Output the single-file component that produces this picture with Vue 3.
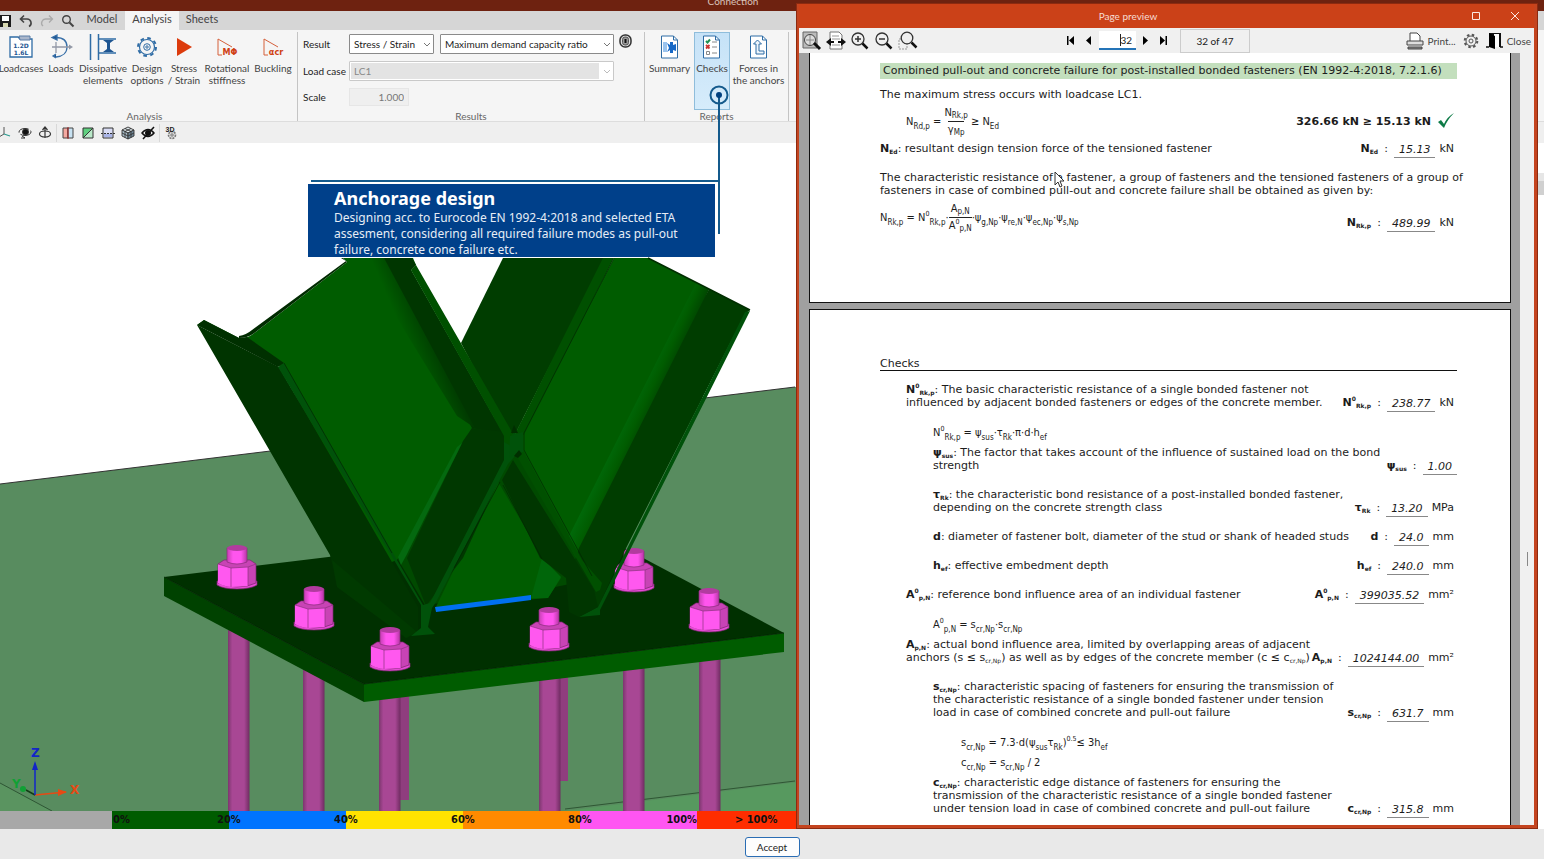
<script setup>
import { ref } from 'vue'

const result = ref('Stress / Strain')
const quantity = ref('Maximum demand capacity ratio')
const loadcase = ref('LC1')
const scale = ref('1.000')
const page = ref('32')

const tabs = ['Model', 'Analysis', 'Sheets']
const activeTab = ref('Analysis')

const rods = [
  { x: 228, y: 625, h: 190 },
  { x: 303, y: 660, h: 155 },
  { x: 379, y: 690, h: 125 },
  { x: 539, y: 660, h: 155 },
  { x: 623, y: 650, h: 165 },
  { x: 699, y: 640, h: 175 }
]
const backNuts = [
  [237, 545],
  [634, 548]
]
const frontNuts = [
  [314, 586],
  [390, 627],
  [549, 607],
  [709, 588]
]

const legend = [
  { name: 'none', label: '' },
  { name: 'green', label: '0%' },
  { name: 'blue', label: '20%' },
  { name: 'yellow', label: '40%' },
  { name: 'orange', label: '60%' },
  { name: 'pink', label: '80%', end: '100%' },
  { name: 'red', label: '> 100%' }
]
</script>

<template>
  <div class="app">
    <header class="app-title">Connection</header>

    <nav class="tabs">
      <div class="quick">
        <button aria-label="Save">
          <svg width="12" height="14" viewBox="0 0 12 14">
            <path d="M0 1h11v12H0z" fill="#1b1b1b" />
            <path d="M2 2h7v5H2z" fill="#fff" />
            <path d="M3 9h5v4H3z" fill="#d8d8b0" />
          </svg>
        </button>
        <button aria-label="Undo">
          <svg width="14" height="14" viewBox="0 0 14 14" fill="none" stroke="#444" stroke-width="1.6">
            <path d="M5 1.500L1.500 5 5 8.500M2 5h6a4 4 0 0 1 2 7.500" />
          </svg>
        </button>
        <button aria-label="Redo">
          <svg width="14" height="14" viewBox="0 0 14 14" fill="none" stroke="#aaa" stroke-width="1.3">
            <path d="M9 1.500L12.500 5 9 8.500M12 5H6a4 4 0 0 0-3 7" />
          </svg>
        </button>
        <button aria-label="Find">
          <svg width="14" height="14" viewBox="0 0 14 14" fill="none" stroke="#444">
            <circle cx="5.500" cy="5.500" r="3.800" stroke-width="1.400" />
            <path d="M8.500 8.500l4 4" stroke-width="2" />
          </svg>
        </button>
      </div>
      <button
        v-for="tab in tabs"
        :key="tab"
        class="tab"
        :class="{ active: tab === activeTab }"
        @click="activeTab = tab"
      >
        {{ tab }}
      </button>
    </nav>

    <div class="ribbon">
      <section class="group group-analysis">
        <div class="tools">
          <button class="tool">
            <svg width="26" height="26" viewBox="0 0 26 26">
              <path d="M2 3h8l2 2h12v18H2z" fill="#fff" stroke="#2f6ca5" stroke-width="1.300" />
              <path d="M11 2h11v4H12z" fill="#a9b6cb" stroke="#5a7ca6" />
              <text x="13" y="14" class="icon-num">1.2D</text>
              <text x="13" y="21" class="icon-num">1.6L</text>
            </svg>
            Loadcases
          </button>
          <button class="tool">
            <svg width="26" height="26" viewBox="0 0 26 26" fill="none" stroke="#3970a8" stroke-width="1.300">
              <path d="M8 3.500c8 0 11 4 11 9.500S15 22.500 8 23" />
              <path d="M9 1L4 3.500 9 6zM8 20l-3 2 3 2" fill="#1e5591" />
              <path d="M4 13h18M8 8v11" stroke="#9298a6" />
              <path d="M21 10.500l4 2.500-4 2.500z" fill="#9298a6" stroke="none" />
            </svg>
            Loads
          </button>
          <button class="tool">
            <svg width="28" height="26" viewBox="0 0 28 26" fill="none" stroke="#2f6ca5">
              <path d="M1.500 0v26M9.500 0v26" stroke-width="1.500" />
              <path d="M10 5h17M10 19h17" stroke-width="1.500" />
              <path d="M14 6h11l-4 3v6l4 3H14l4-3V9z" fill="#1e5591" stroke="none" />
            </svg>
            Dissipative<br />elements
          </button>
          <button class="tool">
            <svg width="26" height="26" viewBox="0 0 26 26" fill="none" stroke="#2f6ca5">
              <circle cx="13" cy="13" r="7.500" stroke-width="1.200" />
              <circle cx="13" cy="13" r="9" stroke-width="2" stroke-dasharray="3.600 3.469" />
              <circle cx="13" cy="13" r="3.300" />
              <circle cx="13" cy="13" r="1.200" />
            </svg>
            Design<br />options
          </button>
          <button class="tool">
            <svg width="26" height="26" viewBox="0 0 26 26"><path d="M6 4l15 9-15 9z" fill="#dc3b0c" /></svg>
            Stress<br />/ Strain
          </button>
          <button class="tool">
            <svg width="26" height="26" viewBox="0 0 26 26">
              <path d="M8 21H4V5l14 8" fill="none" stroke="#d5603b" />
              <text x="16" y="21" class="icon-red">MΦ</text>
            </svg>
            Rotational<br />stiffness
          </button>
          <button class="tool">
            <svg width="26" height="26" viewBox="0 0 26 26">
              <path d="M8 21H4V5l14 8" fill="none" stroke="#d5603b" />
              <text x="16" y="21" class="icon-red">αcr</text>
            </svg>
            Buckling
          </button>
        </div>
        <div class="group-name">Analysis</div>
      </section>

      <section class="group group-results">
        <div class="fields">
          <label for="result">Result</label>
          <div class="inputs">
            <span class="select select-result">
              <select id="result" v-model="result"><option>Stress / Strain</option></select>
              <svg width="8" height="5" viewBox="0 0 8 5"><path d="M1 1l3 3 3-3" /></svg>
            </span>
            <span class="select select-quantity">
              <select v-model="quantity" aria-label="Quantity">
                <option>Maximum demand capacity ratio</option>
              </select>
              <svg width="8" height="5" viewBox="0 0 8 5"><path d="M1 1l3 3 3-3" /></svg>
            </span>
            <button class="target" aria-label="Locate">
              <svg width="13" height="14" viewBox="0 0 13 14">
                <rect x="1" y="1" width="11" height="12" rx="5" fill="#ddd" stroke="#333" stroke-width="1.500" />
                <rect x="3.500" y="3" width="6" height="8" rx="2.500" fill="#999" stroke="#555" />
                <path d="M5.500 5h2v4h-2z" fill="#111" />
              </svg>
            </button>
          </div>
          <label for="loadcase">Load case</label>
          <div class="inputs">
            <span class="select select-case">
              <select id="loadcase" v-model="loadcase" disabled><option>LC1</option></select>
              <svg width="8" height="5" viewBox="0 0 8 5"><path d="M1 1l3 3 3-3" /></svg>
            </span>
          </div>
          <label for="scale">Scale</label>
          <div class="inputs"><input id="scale" v-model="scale" class="scale" disabled /></div>
        </div>
        <div class="group-name">Results</div>
      </section>

      <section class="group group-reports">
        <div class="tools">
          <button class="tool">
            <svg width="20" height="24" viewBox="0 0 20 24">
              <path d="M1.500 1h12l4 4v18h-16z" fill="#fff" stroke="#2f6ca5" />
              <path d="M13.500 1v4h4" fill="none" stroke="#2f6ca5" />
              <path d="M3 7h4v10H3z" fill="#9bc4ee" />
              <path d="M7 8l3 2V7h3v3l3-1v7l-3-1v3h-3v-3l-3 2 2-4z" fill="#1668c6" />
            </svg>
            Summary
          </button>
          <button class="tool checked">
            <svg width="20" height="24" viewBox="0 0 20 24">
              <path d="M1.500 1h12l4 4v18h-16z" fill="#fff" stroke="#2f6ca5" />
              <path d="M13.500 1v4h4" fill="none" stroke="#2f6ca5" />
              <path d="M4 6l1.500 1.500L8 4.500" fill="none" stroke="#209052" stroke-width="2" />
              <path d="M4 10l3.500 3.500M7.500 10L4 13.500" stroke="#c33" stroke-width="1.800" />
              <path d="M4.500 16.500h3v3h-3z" fill="none" stroke="#888" />
              <path d="M10 7h5M10 12h5M10 18h5" stroke="#888" />
            </svg>
            Checks
          </button>
          <button class="tool">
            <svg width="20" height="24" viewBox="0 0 20 24">
              <path d="M1.500 1h12l4 4v18h-16z" fill="#fff" stroke="#2f6ca5" />
              <path d="M13.500 1v4h4" fill="none" stroke="#2f6ca5" />
              <path d="M7 9v10h8v-3h-5V9h2.500L8.500 5l-4 4z" fill="#eef5fb" stroke="#2f6ca5" />
            </svg>
            Forces in<br />the anchors
          </button>
        </div>
        <div class="group-name">Reports</div>
      </section>
    </div>

    <div class="viewbar">
      <button aria-label="Axes">
        <svg width="14" height="14" viewBox="0 0 14 14" fill="none"><path d="M6 1v7l-5 3" stroke="#555" /><path d="M6 8l6 2" stroke="#2a9b90" stroke-width="1.300" /></svg>
      </button>
      <button aria-label="Orbit">
        <svg width="14" height="14" viewBox="0 0 14 14" fill="none" stroke="#333">
          <ellipse cx="7" cy="6" rx="6" ry="3.500" stroke-dasharray="12 2" /><circle cx="7.500" cy="6" r="3" fill="#111" /><path d="M4 10l3 2H3" />
        </svg>
      </button>
      <button aria-label="Rotate">
        <svg width="14" height="14" viewBox="0 0 14 14" fill="none" stroke="#333" stroke-width="1.200">
          <path d="M7 1v11M4.500 4L7 1l2.500 3" /><ellipse cx="7" cy="8" rx="5.500" ry="3" />
        </svg>
      </button>
      <i></i>
      <button aria-label="Section X">
        <svg width="14" height="14" viewBox="0 0 14 14"><path d="M2 2h5v10H2z" fill="#f4a9a1" stroke="#444" /><path d="M7 2h5v10H7z" fill="#c8e2f2" stroke="#444" /><path d="M7 1v12" stroke="#a22" /></svg>
      </button>
      <button aria-label="Section Y">
        <svg width="14" height="14" viewBox="0 0 14 14"><path d="M2 2h10v10H2z" fill="#5fd07f" /><path d="M12 2v10H2z" fill="#b9e8c8" /><path d="M2 2h10v10H2zM2 12L12 2" fill="none" stroke="#333" /></svg>
      </button>
      <button aria-label="Section Z">
        <svg width="14" height="14" viewBox="0 0 14 14"><path d="M2 2h10v10H2z" fill="#d9dcf4" stroke="#333" /><path d="M3 8h8v3H3z" fill="#a9b4e8" /><path d="M0 7.500h14" stroke="#333" stroke-dasharray="2 1" /></svg>
      </button>
      <button aria-label="Solid">
        <svg width="14" height="14" viewBox="0 0 14 14" stroke="#333" stroke-width=".9">
          <path d="M7 1l6 3-6 3-6-3z" fill="#dce6ea" /><path d="M1 4l6 3v6l-6-3z" fill="#a8bcc8" /><path d="M13 4L7 7v6l6-3z" fill="#6f8798" /><path d="M4 2.500l6 3v6M10 2.500l-6 3v6M1 7l6 3 6-3" fill="none" />
        </svg>
      </button>
      <button aria-label="Hide">
        <svg width="14" height="14" viewBox="0 0 14 14"><path d="M1 7q6-7 12 0-6 7-12 0z" fill="none" stroke="#111" stroke-width="1.500" /><circle cx="7" cy="7" r="3" fill="#111" /><path d="M2 13L13 1" stroke="#111" stroke-width="1.500" /></svg>
      </button>
      <i></i>
      <button aria-label="3D settings">
        <svg width="14" height="14" viewBox="0 0 14 14"><circle cx="8" cy="9" r="3.500" fill="#ddd" stroke="#777" stroke-width="1.600" stroke-dasharray="2 1" /><circle cx="8" cy="9" r="1.200" fill="none" stroke="#777" /><text x="6" y="6" class="icon-3d">3D</text></svg>
      </button>
    </div>

    <main class="viewport">
      <svg class="scene" viewBox="0 143 1544 668" preserveAspectRatio="xMinYMin slice">
        <defs>
          <linearGradient id="rod">
            <stop offset="0" stop-color="#7c376e" /><stop offset=".2" stop-color="#a84794" />
            <stop offset=".75" stop-color="#a84794" /><stop offset="1" stop-color="#6f2c61" />
          </linearGradient>
          <linearGradient id="web" gradientUnits="userSpaceOnUse" x1="614" y1="400" x2="655" y2="419">
            <stop offset="0" stop-color="#005c00" /><stop offset=".35" stop-color="#006a0a" />
            <stop offset=".65" stop-color="#005c00" /><stop offset="1" stop-color="#003d00" />
          </linearGradient>
          <linearGradient id="shade" gradientUnits="userSpaceOnUse" x1="410" y1="350" x2="438" y2="338">
            <stop offset="0" stop-color="#005c00" /><stop offset="1" stop-color="#003700" />
          </linearGradient>
          <linearGradient id="bolt">
            <stop offset="0" stop-color="#c53fb2" /><stop offset=".3" stop-color="#ff55ee" />
            <stop offset=".7" stop-color="#ff55ee" /><stop offset="1" stop-color="#b536a4" />
          </linearGradient>
          <g id="nut">
            <path d="M-20 36v4q6 4 20 4t20-4v-4z" fill="#e54bd5" stroke="#7a286d" stroke-width=".7" />
            <path d="M-19 19l6-4h26l6 4v19q-8 4-19 4t-19-4z" fill="#c843b5" stroke="#7a286d" stroke-width=".7" />
            <path d="M-19 19l13 4v19q-8-1-13-4zM-6 23l17-1v19l-17 1z" fill="#ff58ef" />
            <path d="M-19 19l13 4 17-1 8-3M-6 23v19M11 22v19" fill="none" stroke="#8d347f" stroke-width=".7" />
            <path d="M-10 3v14q10 4 20 0V3z" fill="url(#bolt)" stroke="#8a2d7b" stroke-width=".7" />
            <ellipse cy="3" rx="10" ry="3" fill="#b23b9f" />
          </g>
        </defs>

        <path d="M0 484L795 387 1544 296V811H0z" fill="#588c5f" />
        <path d="M0 484L795 387" stroke="#333" fill="none" />
        <path d="M0 783l52 28H0z" fill="#5a9460" />
        <path d="M565 811L1544 689V811z" fill="#57995f" />
        <path d="M0 783l52 28M565 809l230-28" stroke="#2f5634" fill="none" />

        <rect x="400" y="680" width="9" height="120" fill="#8f3d7e" />
        <rect x="560" y="660" width="8" height="121" fill="#8f3d7e" />
        <rect v-for="rod in rods" :key="rod.x" :x="rod.x" :y="rod.y" width="21.500" :height="rod.h" fill="url(#rod)" />

        <path d="M164 577L583 526 784 633 364 684z" fill="#003000" />
        <path d="M164 577l200 107v18L164 596z" fill="#004200" />
        <path d="M364 684l420-51v19L364 702z" fill="#005c00" />
        <path d="M164 577l200 107 420-51" fill="none" stroke="#001e00" stroke-width=".7" />
        <use v-for="nut in backNuts" :key="nut[0]" href="#nut" :x="nut[0]" :y="nut[1]" />

        <path d="M270 345L500 420 590 580 540 590 425 605z" fill="#004a00" />

        <!-- diagonal running from upper right to lower left -->
        <path d="M503 258h102L512 440 461 343z" fill="#003d00" />
        <path d="M614 258h34l61 31-130 261 3 20-60-117v-20z" fill="#005c00" />
        <path d="M696 283L567 540l16 28 34-48 92-231z" fill="url(#web)" />
        <path d="M709 289l41 21-5 4-125 246-22 47-19 10-10-40 10-29z" fill="#003d00" />
        <path d="M648 258l61 31 41 21" fill="none" stroke="#002e00" stroke-width="1.500" />
        <path d="M745 312l5-1-125 249-25 50v5l-21 2 19-10z" fill="#00520a" />
        <path d="M603 258h11L524 435l-9-1z" fill="#005000" />
        <path d="M497 480l46 78 18 20-13 20-112 9z" fill="#005c00" />
        <path d="M542 558l19 19-13 21h-17z" fill="#00660a" />

        <!-- diagonal running from upper left to lower right -->
        <path d="M197 325l7-5 35 18q8 1 14-4l94-72-4-4h70l3 7-5 5 93 165-32-7-75 132-13 5-106-202z" fill="#005c00" />
        <path d="M375 258h37l4 7-5 5 93 165-32-7z" fill="#003600" />
        <path d="M360 258l24 0 91 170-18-12z" fill="url(#shade)" />
        <path d="M197 325l82 42 139 240v25l-11 6-70-51-7-32z" fill="#003400" />
        <path d="M197 325l7-5 35 18 8-1 37 26-6 4z" fill="#003000" />
        <path d="M239 338q8 0 14-4l94-72-4-4h-2l5 3-94 69q-6 5-13 6z" fill="#002b00" />
        <path d="M332 560l5 27 69 51 11-6z" fill="#003a00" />
        <path d="M472 428l33 4 4 26-46 100-37 48-19-48 56-117z" fill="#003800" />
        <path d="M462 443l-56 113-5 9-3-8 59-110z" fill="#04690f" />
        <path d="M278 367l6-4 113 197 26 45 7-2 43-83 31-60v-23l10-4 8 2v13l-14 16-72 138-4 6-4 19 7 7-24 2 10-8v-23z" fill="#00520a" />
        <path d="M411 270l5-5 96 167 2 16-10-6v-6z" fill="#005000" />
        <path d="M513 460l-11 20 38 78 26 20 3 34 10 5 19-10-4-17z" fill="#003600" />
        <path d="M515 453l8-3 59 110 20 23-2 7-4 2z" fill="#005000" />
        <path d="M284 363l108 190M614 258l-90 175v17l68 126M500 482l-46 86M503 485l39 74" fill="none" stroke="#002800" stroke-width=".7" />
        <path d="M510 436l13-4v20l-9 2-5 4z" fill="#00520a" />
        <path d="M511 433l7 0-4-8zM514 456l5-6 3 4-4 4z" fill="#002e00" />
        <path d="M435 607l96-12v5l-95 12z" fill="#0070f0" />

        <use v-for="nut in frontNuts" :key="nut[0]" href="#nut" :x="nut[0]" :y="nut[1]" />

        <g stroke-width="1.500">
          <path d="M35 795l31-3" stroke="#e64a14" /><path d="M58 789l9 3-9 4z" fill="#e64a14" />
          <path d="M35 795l-9-5" stroke="#123c16" /><circle cx="23" cy="789" r="3" fill="#10a035" />
          <path d="M35 795v-28" stroke="#1226c8" /><path d="M32 770l3-9 3 9z" fill="#1226c8" />
        </g>
        <text x="31" y="757" class="axis axis-z">Z</text>
        <text x="70" y="794" class="axis axis-x">X</text>
        <text x="12" y="788" class="axis axis-y">Y</text>
      </svg>
      <aside class="side"></aside>
    </main>

    <div class="legend">
      <div v-for="item in legend" :key="item.name" class="legend-item" :class="item.name">
        <span>{{ item.label }}</span>
        <span v-if="item.end">{{ item.end }}</span>
      </div>
    </div>

    <footer class="footer"><button class="accept">Accept</button></footer>

    <svg class="leader" width="424" height="160" viewBox="0 0 424 160">
      <g fill="none" stroke="#145a8c" stroke-width="2">
        <circle cx="411" cy="15" r="8.500" /><path d="M411 15v139M3 101h408" />
      </g>
      <circle cx="411" cy="15" r="3" fill="#00407f" />
    </svg>
    <section class="callout">
      <h2>Anchorage design</h2>
      <p>
        Designing acc. to Eurocode EN 1992-4:2018 and selected ETA<br />
        assesment, considering all required failure modes as pull-out<br />
        failure, concrete cone failure etc.
      </p>
    </section>

    <div class="preview" role="dialog" aria-label="Page preview">
      <header class="preview-title">
        <span>Page preview</span>
        <button aria-label="Maximize"><svg width="10" height="10" viewBox="0 0 10 10"><path d="M1.500 1.500h7v7h-7z" /></svg></button>
        <button aria-label="Close window"><svg width="10" height="10" viewBox="0 0 10 10"><path d="M1 1l8 8M9 1L1 9" /></svg></button>
      </header>
      <div class="preview-tools">
        <div class="zooms">
          <button aria-label="Whole page">
            <svg width="20" height="20" viewBox="0 0 20 20"><path d="M1 1h14v16H1z" fill="#bbb" stroke="#666" /><circle cx="8" cy="9" r="5.500" fill="#ddd" stroke="#444" /><path d="M4 9h8M8 4v10" stroke="#888" /><path d="M12 12l6 6" stroke="#111" stroke-width="3" /></svg>
          </button>
          <button aria-label="Page width">
            <svg width="20" height="20" viewBox="0 0 20 20"><path d="M4 1h9l3 3v14H4z" fill="#fff" stroke="#777" /><path d="M6 5h7M6 8h8M6 14h8" stroke="#999" /><path d="M0 11l5-4v3h3v2H5v3zM20 11l-5-4v3h-3v2h3v3z" fill="#111" /></svg>
          </button>
          <button aria-label="Zoom in">
            <svg width="20" height="20" viewBox="0 0 20 20" fill="none" stroke="#333"><circle cx="8" cy="8" r="6" stroke-width="1.300" /><path d="M5 8h6M8 5v6" stroke-width="1.500" /><path d="M12.500 12.500l5 5" stroke="#111" stroke-width="2.500" /></svg>
          </button>
          <button aria-label="Zoom out">
            <svg width="20" height="20" viewBox="0 0 20 20" fill="none" stroke="#333"><circle cx="8" cy="8" r="6" stroke-width="1.300" /><path d="M5 8h6" stroke-width="1.500" /><path d="M12.500 12.500l5 5" stroke="#111" stroke-width="2.500" /></svg>
          </button>
          <button aria-label="Zoom window">
            <svg width="20" height="20" viewBox="0 0 20 20" fill="none" stroke="#333"><path d="M1 8h8v10H1z" stroke="#999" stroke-dasharray="2 1" /><circle cx="9" cy="7" r="5.800" fill="#eee" stroke-width="1.300" /><path d="M13.500 11.500l5 5" stroke="#111" stroke-width="2.500" /></svg>
          </button>
        </div>
        <div class="pager">
          <button aria-label="First page"><svg width="9" height="9" viewBox="0 0 9 9"><path d="M1 0h1.500v9H1zM8 0v9L3 4.500z" /></svg></button>
          <button aria-label="Previous page"><svg width="9" height="9" viewBox="0 0 9 9"><path d="M7 0v9L2 4.500z" /></svg></button>
          <span class="page-box"><input v-model="page" aria-label="Page" /></span>
          <button aria-label="Next page"><svg width="9" height="9" viewBox="0 0 9 9"><path d="M2 0v9l5-4.500z" /></svg></button>
          <button aria-label="Last page"><svg width="9" height="9" viewBox="0 0 9 9"><path d="M1 0v9l5-4.500zM6.500 0H8v9H6.500z" /></svg></button>
          <span class="page-count">32 of 47</span>
        </div>
        <div class="actions">
          <button>
            <svg width="18" height="18" viewBox="0 0 18 18" fill="#fff" stroke="#444"><path d="M4 9V1h7l3 3v5" /><path d="M1 9h16v4H1z" fill="#ddd" /><path d="M2 15h14v2H2z" fill="#888" /></svg>
            Print...
          </button>
          <button aria-label="Settings">
            <svg width="16" height="16" viewBox="0 0 16 16" fill="none" stroke="#555"><circle cx="8" cy="8" r="5" /><circle cx="8" cy="8" r="6.300" stroke-width="2" stroke-dasharray="2.500 2.450" /><circle cx="8" cy="8" r="2" /></svg>
          </button>
          <button>
            <svg width="17" height="18" viewBox="0 0 17 18"><path d="M3 1h12v14H3z" fill="#111" /><path d="M8 2h5v13H8z" fill="#fff" /><path d="M3 1l6 3v13l-6-2z" fill="#000" /><path d="M0 15h3M14 15h3" stroke="#111" stroke-width="1.500" /></svg>
            Close
          </button>
        </div>
      </div>

      <div class="preview-body">
        <div class="pages">
          <article class="page page-first">
            <h3 class="check-head">Combined pull-out and concrete failure for post-installed bonded fasteners (EN 1992-4:2018, 7.2.1.6)</h3>
            <p class="line first-line">The maximum stress occurs with loadcase LC1.</p>
            <div class="verdict">
              <div class="formula indent-1">
                N<sub>Rd,p</sub> =
                <span class="frac"><span>N<sub>Rk,p</sub></span><span>γ<sub>Mp</sub></span></span>
                ≥ N<sub>Ed</sub>
              </div>
              <strong>326.66 kN ≥ 15.13 kN</strong>
              <svg width="18" height="16" viewBox="0 0 18 16"><path d="M1 9l3-2 3 4q3-7 10-11Q10 7 7 15z" fill="#0c7a46" /></svg>
            </div>
            <div class="row after-verdict">
              <p><b>N<sub>Ed</sub></b>: resultant design tension force of the tensioned fastener</p>
              <div class="value"><b>N<sub>Ed</sub></b><span>:</span><em>15.13</em><span class="unit">kN</span></div>
            </div>
            <p class="line spaced">
              The characteristic resistance of a fastener, a group of fasteners and the tensioned fasteners of a group of<br />
              fasteners in case of combined pull-out and concrete failure shall be obtained as given by:
            </p>
            <div class="row resistance">
              <div class="formula">
                N<sub>Rk,p</sub> = N<sup>0</sup><sub>Rk,p</sub>·<span class="frac"><span>A<sub>p,N</sub></span><span>A<sup>0</sup><sub>p,N</sub></span></span>·ψ<sub>g,Np</sub>·ψ<sub>re,N</sub>·ψ<sub>ec,Np</sub>·ψ<sub>s,Np</sub>
              </div>
              <div class="value"><b>N<sub>Rk,p</sub></b><span>:</span><em>489.99</em><span class="unit">kN</span></div>
            </div>
          </article>

          <article class="page page-second">
            <h3 class="page-head">Checks</h3>
            <div class="row indent-1">
              <p>
                <b>N<sup>0</sup><sub>Rk,p</sub></b>: The basic characteristic resistance of a single bonded fastener not<br />
                influenced by adjacent bonded fasteners or edges of the concrete member.
              </p>
              <div class="value"><b>N<sup>0</sup><sub>Rk,p</sub></b><span>:</span><em>238.77</em><span class="unit">kN</span></div>
            </div>
            <div class="formula single indent-2">N<sup>0</sup><sub>Rk,p</sub> = ψ<sub>sus</sub>·τ<sub>Rk</sub>·π·d·h<sub>ef</sub></div>
            <div class="row tight indent-2">
              <p>
                <b>ψ<sub>sus</sub></b>: The factor that takes account of the influence of sustained load on the bond<br />
                strength
              </p>
              <div class="value"><b>ψ<sub>sus</sub></b><span>:</span><em>1.00</em></div>
            </div>
            <div class="row spaced indent-2">
              <p>
                <b>τ<sub>Rk</sub></b>: the characteristic bond resistance of a post-installed bonded fastener,<br />
                depending on the concrete strength class
              </p>
              <div class="value"><b>τ<sub>Rk</sub></b><span>:</span><em>13.20</em><span class="unit">MPa</span></div>
            </div>
            <div class="row spaced indent-2">
              <p><b>d</b>: diameter of fastener bolt, diameter of the stud or shank of headed studs</p>
              <div class="value"><b>d</b><span>:</span><em>24.0</em><span class="unit">mm</span></div>
            </div>
            <div class="row spaced indent-2">
              <p><b>h<sub>ef</sub></b>: effective embedment depth</p>
              <div class="value"><b>h<sub>ef</sub></b><span>:</span><em>240.0</em><span class="unit">mm</span></div>
            </div>
            <div class="row spaced indent-1">
              <p><b>A<sup>0</sup><sub>p,N</sub></b>: reference bond influence area of an individual fastener</p>
              <div class="value"><b>A<sup>0</sup><sub>p,N</sub></b><span>:</span><em>399035.52</em><span class="unit">mm²</span></div>
            </div>
            <div class="formula single indent-2">A<sup>0</sup><sub>p,N</sub> = s<sub>cr,Np</sub>·s<sub>cr,Np</sub></div>
            <div class="row tight indent-1">
              <p>
                <b>A<sub>p,N</sub></b>: actual bond influence area, limited by overlapping areas of adjacent<br />
                anchors (s ≤ s<sub>cr,Np</sub>) as well as by edges of the concrete member (c ≤ c<sub>cr,Np</sub>)
              </p>
              <div class="value"><b>A<sub>p,N</sub></b><span>:</span><em>1024144.00</em><span class="unit">mm²</span></div>
            </div>
            <div class="row spaced indent-2">
              <p>
                <b>s<sub>cr,Np</sub></b>: characteristic spacing of fasteners for ensuring the transmission of<br />
                the characteristic resistance of a single bonded fastener under tension<br />
                load in case of combined concrete and pull-out failure
              </p>
              <div class="value"><b>s<sub>cr,Np</sub></b><span>:</span><em>631.7</em><span class="unit">mm</span></div>
            </div>
            <div class="formula single indent-3">s<sub>cr,Np</sub> = 7.3·d(ψ<sub>sus</sub>τ<sub>Rk</sub>)<sup>0.5</sup>≤ 3h<sub>ef</sub></div>
            <div class="formula indent-3">c<sub>cr,Np</sub> = s<sub>cr,Np</sub> / 2</div>
            <div class="row tight indent-2">
              <p>
                <b>c<sub>cr,Np</sub></b>: characteristic edge distance of fasteners for ensuring the<br />
                transmission of the characteristic resistance of a single bonded fastener<br />
                under tension load in case of combined concrete and pull-out failure
              </p>
              <div class="value"><b>c<sub>cr,Np</sub></b><span>:</span><em>315.8</em><span class="unit">mm</span></div>
            </div>
          </article>
        </div>
        <div class="scrollbar"><i></i></div>
      </div>
    </div>

    <svg class="pointer" width="12" height="18" viewBox="0 0 12 18">
      <path d="M1 1v13l3-3 2 5 2-1-2-5h4z" fill="#fff" stroke="#333" />
    </svg>
  </div>
</template>

<style>
body {
  margin: 0;
  overflow: hidden;
}
</style>

<style scoped>
* {
  box-sizing: border-box;
}
.app {
  position: relative;
  display: flex;
  flex-direction: column;
  height: 100vh;
  background: #fff;
  color: #444;
  font: 10px/12px Lato, 'Open Sans', sans-serif;
}
button {
  display: flex;
  align-items: center;
  justify-content: center;
  padding: 0;
  border: 0;
  background: none;
  color: inherit;
  font: inherit;
}
svg {
  flex: none;
}
p,
h2,
h3 {
  margin: 0;
  font: inherit;
}
.app-title {
  height: 11px;
  padding-right: 78px;
  background: #6e2210;
  color: #d9c3bb;
  text-align: center;
  line-height: 2px;
}
.tabs {
  display: flex;
  height: 19px;
  background: #d6d6d6;
}
.quick {
  display: flex;
  gap: 7px;
  width: 79px;
}
.tab {
  width: 46px;
  padding-bottom: 3px;
  font-size: 11px;
}
.tab.active {
  width: 54px;
  background: #f5f5f5;
}
.ribbon {
  display: flex;
  height: 92px;
  background: #f5f5f5;
  border-bottom: 1px solid #ddd;
}
.group {
  display: flex;
  flex-direction: column;
  justify-content: space-between;
  border-right: 1px solid #c4c4c4;
  margin-top: 2px;
}
.group-name {
  text-align: center;
  color: #666;
  line-height: 10px;
}
.group-analysis {
  width: 298px;
}
.group-analysis .group-name {
  padding-right: 8px;
}
.group-results {
  width: 347px;
}
.group-reports {
  width: 144px;
}
.tools {
  display: grid;
  height: 78px;
}
.group-analysis .tools {
  grid-template-columns: 42px 38px 46px 42px 32px 54px 38px;
}
.group-reports .tools {
  grid-template-columns: 49px 36px 57px;
}
.tool {
  flex-direction: column;
  justify-content: flex-start;
  padding-top: 2px;
  white-space: nowrap;
  text-align: center;
}
.tool svg {
  height: 26px;
  margin-bottom: 2px;
}
.tool.checked {
  background: linear-gradient(#c6e2f7, #d6ecfb);
  border: 1px solid #8fbddb;
  padding-top: 1px;
}
.icon-num {
  font: bold 6px 'DejaVu Sans', sans-serif;
  fill: #1e5591;
  text-anchor: middle;
}
.icon-red {
  font: bold 9px 'DejaVu Sans Condensed', sans-serif;
  fill: #cf3f12;
  text-anchor: middle;
}
.icon-3d {
  font: bold 7px 'Liberation Sans', sans-serif;
  fill: #222;
  text-anchor: middle;
}
.fields {
  display: grid;
  grid-template-columns: 46px 1fr;
  grid-template-rows: 20px 20px 18px;
  row-gap: 7px;
  align-items: center;
  padding: 2px 0 0 5px;
  color: #222;
}
.inputs {
  display: flex;
  gap: 6px;
}
.select {
  position: relative;
}
.select svg {
  position: absolute;
  right: 3px;
  top: 8px;
  fill: none;
  stroke: #777;
}
select,
input {
  font: inherit;
  color: #222;
}
select {
  appearance: none;
  width: 100%;
  height: 20px;
  padding: 0 4px;
  background: #fff;
  border: 1px solid #8a8a8a;
  border-radius: 1px;
}
select:disabled {
  background: linear-gradient(#e3e3e3, #e3e3e3) no-repeat 1px 1px / calc(100% - 15px) 16px #fff;
  border-color: #c9c9c9;
  color: #888;
  opacity: 1;
}
select:disabled + svg {
  stroke: #bbb;
}
.select-result {
  width: 85px;
}
.select-quantity {
  width: 174px;
}
.select-case {
  width: 265px;
}
.target {
  margin-left: -1px;
  padding-bottom: 6px;
}
.scale {
  width: 60px;
  height: 18px;
  padding: 0 4px;
  text-align: right;
  color: #777;
  background: #efefef;
  border: 1px solid #e6e6e6;
}
.viewbar {
  display: flex;
  align-items: center;
  gap: 6px;
  height: 21px;
  margin-left: -2px;
  background: #efefef;
}
.viewbar i {
  width: 1px;
  height: 18px;
  margin: 0 -2px;
  background: #d8d8d8;
}
.viewport {
  position: relative;
  flex: 1;
  min-height: 0;
}
.scene {
  display: block;
  width: 100%;
  height: 100%;
}
.side {
  position: absolute;
  inset: 0 0 0 auto;
  width: 20px;
  background: linear-gradient(#fff 30px, #e6e6e6 30px, #e6e6e6 38px, #d0d0d0 38px, #d0d0d0 52px, #fff 52px);
}
.axis {
  font: bold 12px 'DejaVu Sans', sans-serif;
}
.axis-z {
  fill: #1226c8;
}
.axis-x {
  fill: #e64a14;
}
.axis-y {
  fill: #10a035;
}
.legend {
  display: flex;
  height: 18px;
  font: bold 11px/18px 'DejaVu Sans Condensed', 'DejaVu Sans', sans-serif;
  color: #111;
}
.legend-item {
  display: flex;
  justify-content: space-between;
  width: 117px;
}
.legend-item span:first-child {
  margin-left: -12px;
}
.legend .none {
  width: 112px;
  background: #a8a8a8;
}
.legend .green {
  background: #005c00;
}
.legend .green span {
  margin-left: 1px;
}
.legend .blue {
  background: #0074ff;
}
.legend .yellow {
  background: #ffe300;
}
.legend .orange {
  background: #ff8a00;
}
.legend .pink {
  background: #ff55f2;
}
.legend .red {
  background: #ff2d00;
}
.legend .red span {
  margin-left: 38px;
}
.footer {
  display: flex;
  align-items: center;
  justify-content: center;
  height: 30px;
  padding-top: 5px;
  background: #e9e9e9;
}
.accept {
  width: 55px;
  height: 20px;
  border: 1px solid #2a6db4;
  border-radius: 3px;
  background: #fdfdfd;
  color: #222;
}
.leader {
  position: absolute;
  left: 308px;
  top: 80px;
}
.callout {
  position: absolute;
  left: 308px;
  top: 184px;
  width: 407px;
  padding: 3px 0 0 26px;
  height: 73px;
  background: #00408a;
  color: #e6edf6;
  font: 12px/16px 'Noto Sans', 'Open Sans', sans-serif;
  white-space: nowrap;
}
.callout h2 {
  font-size: 18px;
  line-height: 23px;
  font-weight: bold;
  color: #fff;
}
.preview {
  position: absolute;
  left: 796px;
  right: 6px;
  top: 3px;
  bottom: 30px;
  display: flex;
  flex-direction: column;
  border: 1px solid #8c2a10;
  box-shadow: inset 0 0 0 3px #c4441f;
  padding: 0 3px 3px 2px;
  background: #c4441f;
}
.preview-title {
  display: flex;
  align-items: center;
  height: 24px;
  padding-right: 14px;
  background: #cb4118;
  color: #f6ddd3;
}
.preview-title span {
  flex: 1;
  padding-right: 14px;
  text-align: center;
}
.preview-title svg {
  fill: none;
  stroke: #fbe9e2;
}
.preview-title button + button {
  margin-left: 29px;
}
.preview-tools {
  display: flex;
  align-items: center;
  height: 25px;
  padding: 0 3px;
  background: #f0f0f0;
}
.zooms {
  display: flex;
  gap: 4px;
}
.pager {
  display: flex;
  align-items: center;
  gap: 9px;
  margin-left: 148px;
}
.page-box {
  position: relative;
  margin: 0 -4px 0 -3px;
}
.page-box::after {
  content: '';
  position: absolute;
  right: 15px;
  top: 3px;
  width: 1px;
  height: 12px;
  background: #222;
}
.page-box input {
  display: block;
  width: 37px;
  height: 19px;
  padding: 0 4px 0 0;
  text-align: right;
  border: 0;
  border-bottom: 2px solid #2474b8;
  background: #fff;
}
.page-count {
  width: 70px;
  margin-left: 3px;
  border: 1px solid #ccc;
  text-align: center;
  line-height: 22px;
  color: #222;
}
.actions {
  display: flex;
  gap: 7px;
  margin-left: auto;
}
.actions button {
  gap: 4px;
}
.preview-body {
  display: flex;
  flex: 1;
  min-height: 0;
  background: #a0a0a0;
}
.pages {
  display: flex;
  flex-direction: column;
  gap: 6px;
  flex: 1;
  margin: 0 9px 0 10px;
  min-width: 0;
}
.page {
  background: #fff;
  border: 1px solid #111;
  border-top-width: 0;
  padding: 10px 53px 0 70px;
  color: #1c1c1c;
  font: 11px/13px 'DejaVu Sans', sans-serif;
  white-space: nowrap;
}
.page-first {
  flex: none;
  padding-bottom: 68px;
}
.page-second {
  flex: 1;
  min-height: 0;
  padding-top: 47px;
  border-top-width: 1px;
  border-bottom-width: 0;
  overflow: hidden;
}
.check-head {
  padding-left: 3px;
  background: #c3dfbd;
  line-height: 16px;
}
.first-line {
  margin-top: 9px;
}
sub,
sup {
  font-size: 6px;
  line-height: 0;
}
sub {
  vertical-align: -2px;
}
sup {
  vertical-align: 5px;
}
.formula {
  line-height: 20px;
  font-family: 'DejaVu Sans Condensed', 'DejaVu Sans', sans-serif;
}
.formula sub {
  font-size: 8px;
  vertical-align: -4px;
}
.formula sup {
  font-size: 7px;
}
.formula.single {
  margin-top: 14px;
}
.frac {
  display: inline-flex;
  flex-direction: column;
  align-items: center;
  vertical-align: middle;
}
.frac span {
  line-height: 16px;
}
.formula .frac sub {
  vertical-align: -2px;
}
.frac span + span {
  border-top: 1px solid #222;
}
.verdict {
  display: flex;
  align-items: center;
  height: 36px;
  margin-top: 2px;
}
.verdict strong {
  margin-left: auto;
}
.verdict svg {
  margin: 0 2px 0 6px;
}
.after-verdict {
  margin-top: 3px;
}
.line.spaced,
.row.spaced {
  margin-top: 16px;
}
.resistance {
  height: 34px;
  margin-top: 3px;
}
.resistance .value {
  margin-bottom: 5px;
}
.row {
  display: flex;
  justify-content: space-between;
  align-items: flex-end;
}
.row.tight {
  margin-top: 3px;
}
.value {
  display: flex;
  flex: none;
  gap: 6px;
}
.value em {
  margin: 1px 0 -3px;
  padding: 0 5px 1px;
  border-bottom: 1px solid #888;
}
.value .unit {
  margin: 0 3px 0 -2px;
}
.indent-1 {
  margin-left: 26px;
}
.indent-2 {
  margin-left: 53px;
}
.indent-3 {
  margin-left: 81px;
}
.page-head {
  margin-bottom: 12px;
  border-bottom: 1px solid #111;
}
.scrollbar {
  display: flex;
  align-items: center;
  justify-content: center;
  width: 14px;
  background: #f0f0f0;
}
.scrollbar i {
  width: 1px;
  height: 14px;
  margin-top: 240px;
  background: #888;
}
.pointer {
  position: absolute;
  left: 1054px;
  top: 171px;
}
</style>
